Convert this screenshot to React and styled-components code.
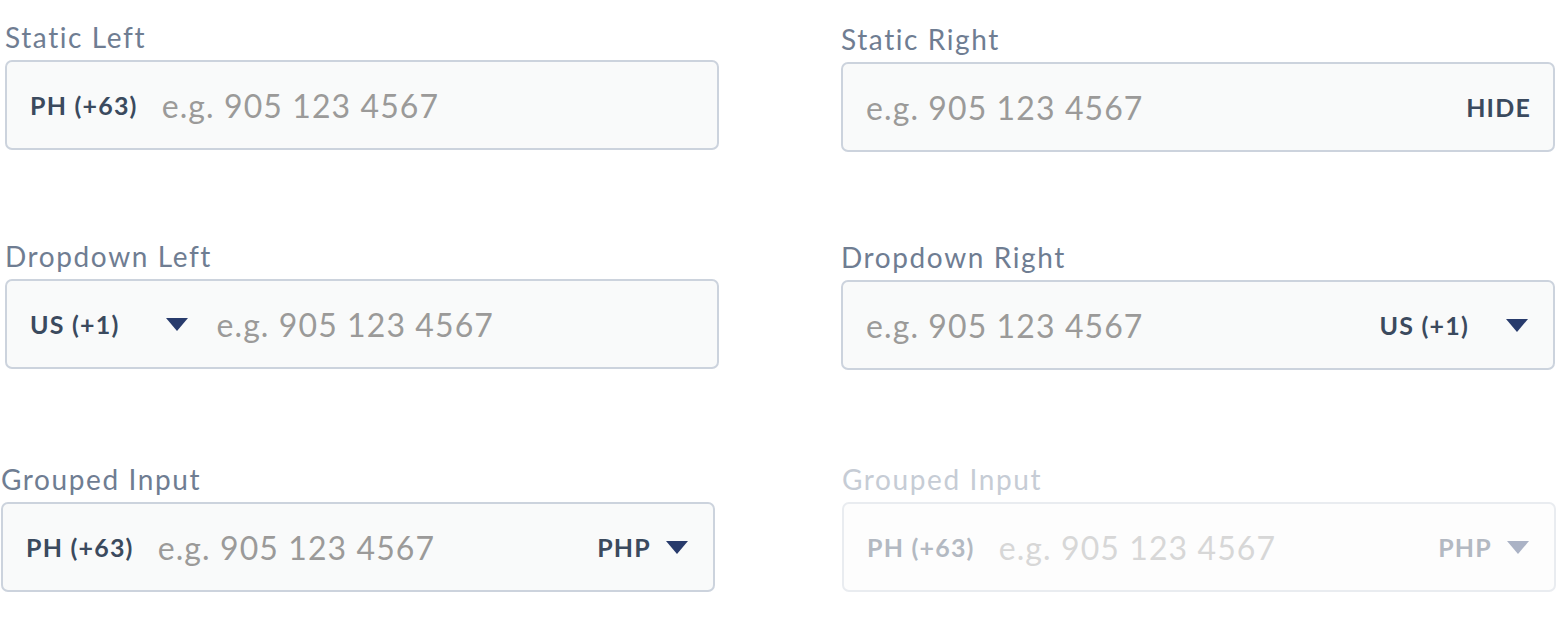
import React from "react";
import styled, { createGlobalStyle } from "styled-components";

const Global = createGlobalStyle`
  html, body { margin: 0; padding: 0; background: #ffffff; }
  body { font-family: "Lato", "Open Sans", sans-serif; -webkit-font-smoothing: antialiased; }
`;

const Page = styled.div`
  display: grid;
  grid-template-columns: 714px 714px;
  column-gap: 122px;
  row-gap: 88px;
  padding: 21px 0 0 5px;
`;

const Field = styled.div`
  display: flex;
  flex-direction: column;
  width: 714px;
  justify-self: start;
  margin-left: ${(p) => p.$shift || 0}px;
  margin-top: ${(p) => p.$down || 0}px;
`;

const Label = styled.label`
  font-size: 28px;
  line-height: 32px;
  letter-spacing: 1.6px;
  color: ${(p) => (p.$disabled ? "#c6ccd5" : "#6f7d92")};
  margin-bottom: 7px;
`;

const Box = styled.div`
  box-sizing: border-box;
  height: 90px;
  display: flex;
  align-items: center;
  padding: 0 22px 0 23px;
  border: 2px solid ${(p) => (p.$disabled ? "#e9ecf0" : "#ccd3dd")};
  border-radius: 7px;
  background: ${(p) => (p.$disabled ? "#fdfdfd" : "#f9fafa")};
`;

const Code = styled.span`
  font-size: 25px;
  font-weight: 700;
  letter-spacing: 1.2px;
  color: ${(p) => (p.$disabled ? "#b3b9c2" : "#3b4a5e")};
  white-space: nowrap;
  margin-right: ${(p) => p.$gap || 0}px;
`;

const Input = styled.input`
  flex: 1;
  min-width: 0;
  border: 0;
  outline: 0;
  padding: 0;
  margin: 0;
  background: transparent;
  font-family: "Lato", "Open Sans", sans-serif;
  font-size: 32px;
  letter-spacing: 1.1px;
  color: #3b4a5e;
  &::placeholder {
    color: ${(p) => (p.$disabled ? "#d7d7d7" : "#9b9a99")};
    opacity: 1;
  }
`;

const Caret = styled.svg`
  flex: none;
  width: 22px;
  height: 13px;
  margin-right: ${(p) => p.$gap || 0}px;
  margin-left: ${(p) => p.$left || 0}px;
`;

const Arrow = ({ disabled, gap, left }) => (
  <Caret viewBox="0 0 22 13" $gap={gap} $left={left}>
    <polygon points="0,0 22,0 11,13" fill={disabled ? "#aab2c5" : "#283b6c"} />
  </Caret>
);

export default function App() {
  return (
    <>
      <Global />
      <Page>
        <Field>
          <Label>Static Left</Label>
          <Box>
            <Code $gap={24}>PH (+63)</Code>
            <Input placeholder="e.g. 905 123 4567" />
          </Box>
        </Field>
        <Field $down={2}>
          <Label>Static Right</Label>
          <Box>
            <Input placeholder="e.g. 905 123 4567" />
            <Code>HIDE</Code>
          </Box>
        </Field>

        <Field>
          <Label>Dropdown Left</Label>
          <Box>
            <Code $gap={47}>US (+1)</Code>
            <Arrow gap={28} />
            <Input placeholder="e.g. 905 123 4567" />
          </Box>
        </Field>
        <Field $down={1}>
          <Label>Dropdown Right</Label>
          <Box>
            <Input placeholder="e.g. 905 123 4567" />
            <Code>US (+1)</Code>
            <Arrow left={37} gap={3} />
          </Box>
        </Field>

        <Field $shift={-4} $down={5}>
          <Label>Grouped Input</Label>
          <Box>
            <Code $gap={24}>PH (+63)</Code>
            <Input placeholder="e.g. 905 123 4567" />
            <Code>PHP</Code>
            <Arrow left={15} gap={3} />
          </Box>
        </Field>
        <Field $shift={1} $down={5}>
          <Label $disabled>Grouped Input</Label>
          <Box $disabled>
            <Code $disabled $gap={24}>PH (+63)</Code>
            <Input $disabled disabled placeholder="e.g. 905 123 4567" />
            <Code $disabled>PHP</Code>
            <Arrow disabled left={15} gap={3} />
          </Box>
        </Field>
      </Page>
    </>
  );
}
